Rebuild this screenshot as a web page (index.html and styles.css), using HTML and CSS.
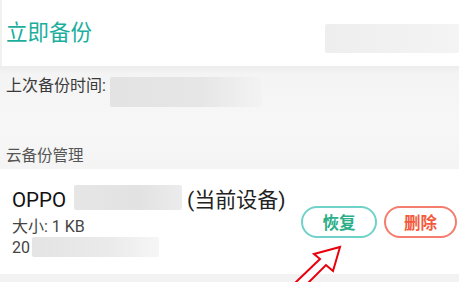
FILE: index.html
```html
<!DOCTYPE html>
<html lang="zh">
<head>
<meta charset="utf-8">
<link rel="stylesheet" href="styles.css">
</head>
<body>
<div class="page">
  <div class="top">
    <div class="title">立即备份</div>
    <div class="blur blur-top"></div>
  </div>
  <div class="section">
    <div class="last-row">
      <span class="label">上次备份时间:</span>
      <div class="blur blur-time"></div>
    </div>
    <div class="group-label">云备份管理</div>
  </div>
  <div class="card">
    <div class="info">
      <div class="name-row">
        <span class="name">OPPO</span>
        <div class="blur blur-name"></div>
        <span class="name cur">(当前设备)</span>
      </div>
      <div class="meta">大小: 1 KB</div>
      <div class="meta date-row"><span>20</span><div class="blur blur-date"></div></div>
    </div>
    <div class="actions">
      <button class="btn btn-restore">恢复</button>
      <button class="btn btn-delete">删除</button>
    </div>
  </div>
  <div class="bottom"></div>
  <svg class="arrow" width="459" height="282" viewBox="0 0 459 282">
    <polygon points="295,283 320,259 314,254 340,247 333,271 326,265 308,283" fill="#fff" stroke="#e8000b" stroke-width="2" stroke-linejoin="miter"/>
  </svg>
</div>
</body>
</html>
```
FILE: styles.css
```css
html, body {
  margin: 0;
  padding: 0;
  background: #f3f3f3;
}
.page {
  position: relative;
  width: 459px;
  height: 282px;
  overflow: hidden;
  font-family: "Roboto", "Noto Sans CJK SC", sans-serif;
}
.top {
  height: 66px;
  background: #fff;
  border-left: 2px solid #f1f1f1;
  display: flex;
  align-items: center;
  justify-content: space-between;
  padding-left: 4px;
  box-sizing: border-box;
}
.title {
  font-size: 21.5px;
  color: #1bae9d;
  line-height: 26px;
}
.blur {
  border-radius: 2px;
}
.blur-top {
  width: 134px;
  height: 29px;
  margin-top: 11px;
  background: linear-gradient(90deg, #eeeeee, #f2f2f2 70%, #f4f4f4);
}
.section {
  background: linear-gradient(180deg, #ececec 0, #f4f4f4 8px, #f7f7f7 60px, #f4f4f4 100%);
  padding: 10px 0 3px 6px;
}
.last-row {
  display: flex;
  align-items: flex-start;
}
.label {
  font-size: 16px;
  line-height: 20px;
  color: #3a3a3a;
}
.blur-time {
  width: 152px;
  height: 30px;
  margin-top: 1px;
  margin-left: 4px;
  background: linear-gradient(90deg, #e3e3e3, #e6e6e6 60%, #f3f3f3);
}
.group-label {
  margin-top: 39px;
  font-size: 15.5px;
  line-height: 20px;
  color: #555;
}
.card {
  background: #fff;
  height: 105px;
  display: flex;
  align-items: center;
  padding: 0 2px 0 12px;
  box-sizing: border-box;
}
.info {
  flex: 1;
  padding-top: 1px;
}
.name-row {
  display: flex;
  align-items: flex-start;
  height: 26px;
}
.name {
  font-size: 20.5px;
  line-height: 26px;
  color: #111;
}
.cur {
  font-size: 21px;
  margin-left: 5px;
  color: #222;
}
.blur-name {
  width: 108px;
  height: 25px;
  margin-top: -2px;
  margin-left: 8px;
  background: linear-gradient(90deg, #e6e6e6, #e2e2e2 60%, #ececec);
}
.meta {
  font-size: 16px;
  line-height: 20px;
  color: #444;
  margin-top: 4px;
}
.date-row {
  display: flex;
  align-items: flex-start;
  margin-top: 1px;
}
.blur-date {
  width: 127px;
  height: 20px;
  margin-left: 2px;
  margin-top: -1px;
  background: linear-gradient(90deg, #e4e4e4, #eaeaea 60%, #f6f6f6);
}
.actions {
  display: flex;
  gap: 7px;
}
.btn {
  width: 76px;
  height: 32px;
  border-radius: 16px;
  background: #fff;
  font-family: "Noto Sans CJK SC", sans-serif;
  font-size: 16.5px;
  font-weight: 700;
  padding: 0;
  box-sizing: border-box;
}
.btn-restore {
  border: 2px solid #70d2c9;
  color: #2aae88;
}
.btn-delete {
  width: 73px;
  border: 2px solid #f47d6d;
  color: #f25a3e;
}
.bottom {
  height: 8px;
  background: #f2f2f2;
}
.arrow {
  position: absolute;
  left: 0;
  top: 0;
  pointer-events: none;
}
```
